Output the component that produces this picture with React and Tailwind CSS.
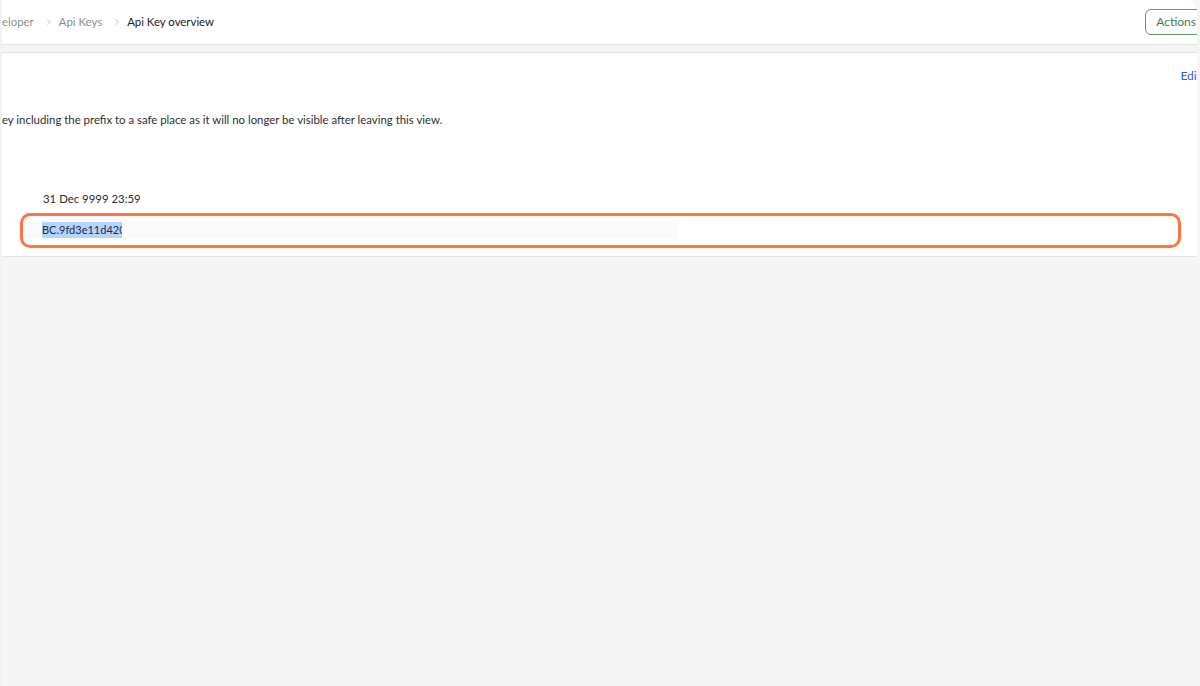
import { ChevronRight, ChevronDown } from 'lucide-react'

function Clipped({ hidden, children, className = '' }) {
  // text whose start runs past the left edge of the panel
  return (
    <div className={`flex whitespace-nowrap ${className}`}>
      <div className="flex w-0 justify-end">
        <span>{hidden}</span>
      </div>
      {children}
    </div>
  )
}

export default function App() {
  return (
    <div
      className="relative flex h-[686px] w-[1200px] flex-col overflow-hidden bg-[#f5f5f5] pl-[2px] pr-[3px] text-[11.4px] leading-[16px] text-[#2a2a2a]"
      style={{ fontFamily: 'Lato, "Noto Sans", sans-serif' }}
    >
      <div className="absolute inset-y-0 left-0 w-[2px] bg-[#f1f1f8]" />

      {/* header */}
      <div className="flex h-[45px] items-center justify-between overflow-hidden rounded-tr-[10px] border-b border-[#e6e6e6] bg-white">
        <div className="flex items-center">
          <Clipped hidden="Dev" className="text-[#8d8d8d]">eloper</Clipped>
          <ChevronRight size={10} strokeWidth={1.5} className="ml-[10px] text-[#9a9a9a]" />
          <span className="ml-[5px] text-[#8d8d8d]">Api Keys</span>
          <ChevronRight size={10} strokeWidth={1.5} className="ml-[10px] text-[#9a9a9a]" />
          <span className="ml-[5px] text-[#222]">Api Key overview</span>
        </div>
        <button className="mr-[-30px] flex h-[26px] items-center gap-2 rounded-[6px] border border-[#5d9b70] px-[10px] text-[12px] text-[#3d7d52]">
          Actions
          <ChevronDown size={12} />
        </button>
      </div>

      <div className="h-[7px]" />

      {/* card */}
      <div className="relative h-[205px] overflow-hidden border-y border-[#e3e3e3] bg-white">
        <div className="flex justify-end pt-[15px]">
          <span className="mr-[-4px] text-[12px] text-[#2f5bea]">Edit</span>
        </div>
        <Clipped hidden="Copy this API k" className="mt-[28px] text-[#2f2f2f]">
          ey including the prefix to a safe place as it will no longer be visible after leaving this view.
        </Clipped>
        <div className="mt-[63px] flex items-center pl-[41px]">
          <span>31 Dec 9999 23:59</span>
        </div>
        <div className="mt-[14px] ml-[20px] flex h-[18px] w-[656px] items-center bg-[#fafafa] pl-[20px]">
          <span className="block w-[80px] overflow-hidden whitespace-nowrap bg-[#b4d5fe] text-[11px] text-[#1f2a44]">BC.9fd3e11d420b7</span>
        </div>
      </div>

      {/* highlight overlay */}
      <div className="absolute left-[20px] top-[213px] h-[35px] w-[1161px] rounded-[10px] border-[3px] border-[#ff7441]" />
    </div>
  )
}
